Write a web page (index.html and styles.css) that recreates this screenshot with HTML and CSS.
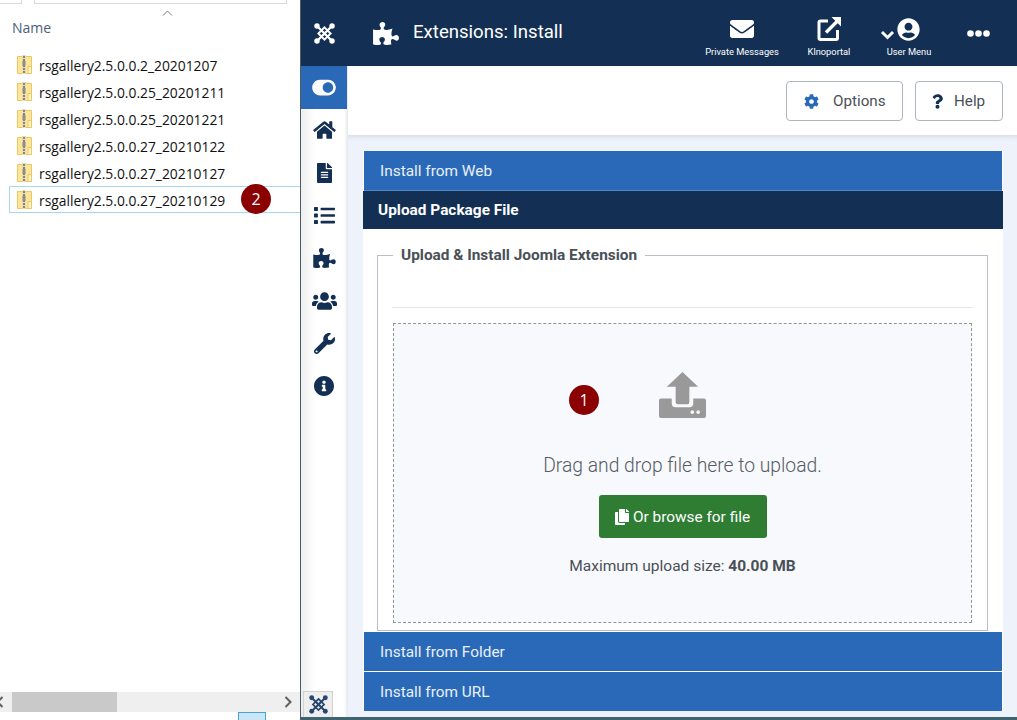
FILE: index.html
```html
<!DOCTYPE html>
<html lang="en">
<head>
  <meta charset="UTF-8">
  <title>Extensions: Install</title>
  <meta name="viewport" content="width=device-width, initial-scale=1.0" />
  <link rel="stylesheet" href="styles.css">
</head>
<body>
  <svg class="defs" width="0" height="0">
    <symbol id="joomla" viewBox="0 0 24 24">
      <g fill="none" stroke="currentColor">
        <path d="M4 4 L20 20 M20 4 L4 20" stroke-width="2.600"/>
        <path d="M12 5 L19 12 L12 19 L5 12 Z" stroke-width="2.200"/>
      </g>
      <g fill="currentColor">
        <circle cx="3.400" cy="3.400" r="3.100"/><circle cx="20.600" cy="3.400" r="3.100"/>
        <circle cx="3.400" cy="20.600" r="3.100"/><circle cx="20.600" cy="20.600" r="3.100"/>
      </g>
    </symbol>
    <symbol id="puzzle" viewBox="0 0 576 512">
      <path d="M519.442 288.651c-41.519 0-59.5 31.593-82.058 31.593C377.409 320.244 432 144 432 144s-196.288 80-196.288-3.297c0-35.827 36.288-46.25 36.288-85.985C272 19.216 243.885 0 210.539 0c-34.654 0-66.366 18.891-66.366 56.346 0 41.364 31.711 59.277 31.711 81.75C175.885 207.719 0 166.758 0 166.758v333.237s178.635 41.047 178.635-28.662c0-22.473-40-40.107-40-81.471 0-37.456 29.25-56.346 63.577-56.346 33.673 0 61.788 19.216 61.788 54.717 0 39.735-36.288 50.158-36.288 85.985 0 60.803 129.675 25.73 181.23 25.73 0 0-34.725-120.101 25.827-120.101 35.962 0 46.423 36.152 86.308 36.152C556.712 416 576 387.99 576 354.443c0-34.199-18.962-65.792-56.558-65.792z" fill="currentColor"/>
    </symbol>
    <symbol id="zip" viewBox="0 0 15 20">
      <path d="M.5 1.500h14v17H.5z" fill="#fde59a" stroke="#ecc865"/>
      <path d="M11 11.500h3.500v7H11z" fill="#fff3c8" stroke="#ecc865"/>
      <path d="M5 0h4v19H5z" fill="#eadcae"/>
      <path d="M7 1v17" stroke="#85857c" stroke-width="2" stroke-dasharray="2 1"/>
      <path d="M5.500 6h3v5h-3z" fill="#8f8f86"/>
    </symbol>
  </svg>

  <div class="screen">
    <div class="explorer">
      <div class="explorer-top">
        <span class="crumb-box"></span>
        <span class="search-box"></span>
      </div>
      <div class="caret"><svg width="11" height="6" viewBox="0 0 11 6"><path d="M1 5.500 L5.500 1 L10 5.500" fill="none" stroke="#7a7a7a"/></svg></div>
      <div class="col-name">Name</div>
      <ul class="files">
        <li class="file"><svg class="zip-icon"><use href="#zip"/></svg>rsgallery2.5.0.0.2_20201207</li>
        <li class="file"><svg class="zip-icon"><use href="#zip"/></svg>rsgallery2.5.0.0.25_20201211</li>
        <li class="file"><svg class="zip-icon"><use href="#zip"/></svg>rsgallery2.5.0.0.25_20201221</li>
        <li class="file"><svg class="zip-icon"><use href="#zip"/></svg>rsgallery2.5.0.0.27_20210122</li>
        <li class="file"><svg class="zip-icon"><use href="#zip"/></svg>rsgallery2.5.0.0.27_20210127</li>
        <li class="file selected"><svg class="zip-icon"><use href="#zip"/></svg>rsgallery2.5.0.0.27_20210129<span class="badge badge-two">2</span></li>
      </ul>
      <div class="hscroll">
        <svg class="arrow" width="8" height="12" viewBox="0 0 8 12"><path d="M6.500 1 L1.500 6 L6.500 11" fill="none" stroke="#606060" stroke-width="2"/></svg>
        <div class="track"><div class="thumb"></div></div>
        <svg class="arrow" width="8" height="12" viewBox="0 0 8 12"><path d="M1.500 1 L6.500 6 L1.500 11" fill="none" stroke="#606060" stroke-width="2"/></svg>
      </div>
      <div class="taskbar"><span class="task-btn"></span></div>
    </div>

    <div class="admin">
      <header class="topbar">
        <div class="brand"><svg class="brand-logo"><use href="#joomla"/></svg></div>
        <svg class="title-icon"><use href="#puzzle"/></svg>
        <h1 class="page-title">Extensions: Install</h1>
        <nav class="top-items">
          <a class="top-item item-msg">
            <svg width="24" height="18" viewBox="0 64 512 384" preserveAspectRatio="none"><path fill="currentColor" d="M502.3 190.8c3.9-3.1 9.7-.2 9.7 4.7V400c0 26.5-21.5 48-48 48H48c-26.5 0-48-21.5-48-48V195.6c0-5 5.7-7.8 9.7-4.7 22.4 17.4 52.1 39.5 154.1 113.6 21.1 15.4 56.7 47.8 92.2 47.6 35.7.3 72-32.8 92.3-47.6 102-74.1 131.6-96.3 154-113.7zM256 320c23.2.4 56.6-29.2 73.4-41.4 132.7-96.3 142.8-104.7 173.4-128.7 5.8-4.5 9.2-11.5 9.2-18.9v-19c0-26.5-21.5-48-48-48H48C21.5 64 0 85.5 0 112v19c0 7.4 3.4 14.3 9.2 18.9 30.6 23.9 40.7 32.4 173.4 128.7 16.8 12.2 50.2 41.8 73.4 41.4z"/></svg>
            <span>Private Messages</span>
          </a>
          <a class="top-item item-link">
            <svg width="24" height="24" viewBox="0 0 24 24"><path d="M11 4H3.500A1.500 1.500 0 0 0 2 5.500V21a1.500 1.500 0 0 0 1.500 1.500H19a1.500 1.500 0 0 0 1.500-1.500V13" fill="none" stroke="currentColor" stroke-width="3"/><path d="M9 15.500 L20 4.500" stroke="currentColor" stroke-width="3.400"/><path d="M14.500 0H24V9.500Z" fill="currentColor"/></svg>
            <span>Klnoportal</span>
          </a>
          <a class="top-item item-user">
            <span class="user-icons">
              <svg width="15" height="10" viewBox="0 0 14 10"><path d="M1.500 2 L7 7.500 L12.500 2" fill="none" stroke="currentColor" stroke-width="3"/></svg>
              <svg width="23" height="23" viewBox="0 0 496 512" class="user-circle"><path fill="currentColor" d="M248 8C111 8 0 119 0 256s111 248 248 248 248-111 248-248S385 8 248 8zm0 96c48.600 0 88 39.400 88 88s-39.400 88-88 88-88-39.400-88-88 39.400-88 88-88zm0 344c-58.700 0-111.300-26.600-146.500-68.200 18.800-35.400 55.600-59.800 98.500-59.800 2.400 0 4.800.4 7.100 1.100 13 4.200 26.600 6.900 40.900 6.900 14.300 0 28-2.700 40.900-6.900 2.300-.7 4.700-1.100 7.100-1.100 42.900 0 79.700 24.400 98.500 59.800C359.300 421.400 306.700 448 248 448z"/></svg>
            </span>
            <span>User Menu</span>
          </a>
          <a class="top-item item-more">
            <svg width="23" height="7" viewBox="0 0 23 7"><circle cx="3.500" cy="3.500" r="3.300" fill="currentColor"/><circle cx="11.500" cy="3.500" r="3.300" fill="currentColor"/><circle cx="19.500" cy="3.500" r="3.300" fill="currentColor"/></svg>
          </a>
        </nav>
      </header>

      <div class="body-row">
        <aside class="sidebar">
          <a class="side-item active"><svg width="24" height="21" viewBox="0 0 576 512"><path fill="currentColor" d="M384 64H192C86 64 0 150 0 256s86 192 192 192h192c106 0 192-86 192-192S490 64 384 64zm0 320c-70.800 0-128-57.300-128-128 0-70.800 57.300-128 128-128 70.800 0 128 57.300 128 128 0 70.800-57.300 128-128 128z"/></svg></a>
          <a class="side-item"><svg width="23" height="20" viewBox="0 0 576 512"><path fill="currentColor" d="M280.370 148.260L96 300.110V464a16 16 0 0 0 16 16l112.060-.29a16 16 0 0 0 15.920-16V368a16 16 0 0 1 16-16h64a16 16 0 0 1 16 16v95.640a16 16 0 0 0 16 16.050L464 480a16 16 0 0 0 16-16V300L295.670 148.260a12.190 12.190 0 0 0-15.300 0zM571.600 251.470L488 182.560V44.050a12 12 0 0 0-12-12h-56a12 12 0 0 0-12 12v72.610L318.470 43a48 48 0 0 0-61 0L4.340 251.470a12 12 0 0 0-1.600 16.900l25.500 31A12 12 0 0 0 45.150 301l235.220-193.740a12.190 12.190 0 0 1 15.300 0L530.900 301a12 12 0 0 0 16.900-1.600l25.500-31a12 12 0 0 0-1.700-16.930z"/></svg></a>
          <a class="side-item"><svg width="15" height="20" viewBox="0 0 384 512"><path fill="currentColor" d="M224 136V0H24C10.700 0 0 10.700 0 24v464c0 13.300 10.700 24 24 24h336c13.300 0 24-10.700 24-24V160H248c-13.200 0-24-10.800-24-24zm64 236c0 6.600-5.400 12-12 12H108c-6.600 0-12-5.400-12-12v-8c0-6.600 5.400-12 12-12h168c6.600 0 12 5.400 12 12v8zm0-64c0 6.600-5.400 12-12 12H108c-6.600 0-12-5.400-12-12v-8c0-6.600 5.400-12 12-12h168c6.600 0 12 5.400 12 12v8zm0-72v8c0 6.600-5.400 12-12 12H108c-6.600 0-12-5.400-12-12v-8c0-6.600 5.400-12 12-12h168c6.600 0 12 5.400 12 12zm96-114.100v6.100H256V0h6.100c6.400 0 12.500 2.500 17 7l97.900 98c4.500 4.500 7 10.600 7 16.900z"/></svg></a>
          <a class="side-item"><svg width="21" height="21" viewBox="0 0 512 512"><path fill="currentColor" d="M80 368H16a16 16 0 0 0-16 16v64a16 16 0 0 0 16 16h64a16 16 0 0 0 16-16v-64a16 16 0 0 0-16-16zm0-320H16A16 16 0 0 0 0 64v64a16 16 0 0 0 16 16h64a16 16 0 0 0 16-16V64a16 16 0 0 0-16-16zm0 160H16a16 16 0 0 0-16 16v64a16 16 0 0 0 16 16h64a16 16 0 0 0 16-16v-64a16 16 0 0 0-16-16zm416 176H176a16 16 0 0 0-16 16v32a16 16 0 0 0 16 16h320a16 16 0 0 0 16-16v-32a16 16 0 0 0-16-16zm0-320H176a16 16 0 0 0-16 16v32a16 16 0 0 0 16 16h320a16 16 0 0 0 16-16V80a16 16 0 0 0-16-16zm0 160H176a16 16 0 0 0-16 16v32a16 16 0 0 0 16 16h320a16 16 0 0 0 16-16v-32a16 16 0 0 0-16-16z"/></svg></a>
          <a class="side-item"><svg class="side-puzzle"><use href="#puzzle"/></svg></a>
          <a class="side-item"><svg width="25" height="20" viewBox="0 0 640 512"><path fill="currentColor" d="M96 224c35.300 0 64-28.700 64-64s-28.700-64-64-64-64 28.700-64 64 28.700 64 64 64zm448 0c35.300 0 64-28.700 64-64s-28.700-64-64-64-64 28.700-64 64 28.700 64 64 64zm32 32h-64c-17.600 0-33.500 7.100-45.100 18.600 40.300 22.100 68.900 62 75.100 109.400h66c17.700 0 32-14.300 32-32v-32c0-35.300-28.700-64-64-64zm-256 0c61.900 0 112-50.100 112-112S381.900 32 320 32 208 82.100 208 144s50.100 112 112 112zm76.800 32h-8.300c-20.800 10-43.900 16-68.500 16s-47.600-6-68.500-16h-8.300C179.600 288 128 339.600 128 403.200V432c0 26.500 21.500 48 48 48h288c26.500 0 48-21.500 48-48v-28.800c0-63.600-51.600-115.200-115.200-115.200zm-223.700-13.400C161.500 263.100 145.600 256 128 256H64c-35.300 0-64 28.700-64 64v32c0 17.700 14.300 32 32 32h65.900c6.300-47.400 34.900-87.300 75.200-109.400z"/></svg></a>
          <a class="side-item"><svg width="21" height="21" viewBox="0 0 512 512"><path fill="currentColor" d="M507.730 109.100c-2.240-9.030-13.540-12.090-20.120-5.510l-74.360 74.360-67.880-11.310-11.310-67.880 74.360-74.360c6.620-6.620 3.430-17.900-5.660-20.160-47.380-11.740-99.550.91-136.580 37.930-39.640 39.640-50.550 97.100-34.050 147.200L18.740 402.760c-24.990 24.990-24.990 65.510 0 90.500 24.990 24.990 65.510 24.990 90.500 0l213.210-213.210c50.120 16.710 107.470 5.680 147.370-34.220 37.070-37.070 49.700-89.320 37.910-136.730zM64 472c-13.250 0-24-10.750-24-24 0-13.260 10.750-24 24-24s24 10.740 24 24c0 13.250-10.750 24-24 24z"/></svg></a>
          <a class="side-item"><svg width="20" height="20" viewBox="8 8 496 496"><path fill="currentColor" d="M256 8C119.043 8 8 119.083 8 256c0 136.997 111.043 248 248 248s248-111.003 248-248C504 119.083 392.957 8 256 8zm0 110c23.196 0 42 18.804 42 42s-18.804 42-42 42-42-18.804-42-42 18.804-42 42-42zm56 254c0 6.627-5.373 12-12 12h-88c-6.627 0-12-5.373-12-12v-24c0-6.627 5.373-12 12-12h12v-64h-12c-6.627 0-12-5.373-12-12v-24c0-6.627 5.373-12 12-12h64c6.627 0 12 5.373 12 12v100h12c6.627 0 12 5.373 12 12v24z"/></svg></a>
          <div class="side-foot"><svg class="foot-logo"><use href="#joomla"/></svg></div>
        </aside>

        <main class="main">
          <div class="toolbar">
            <button class="tool-btn btn-options" type="button">
              <svg width="15" height="15" viewBox="0 0 512 512"><path fill="#2a69b8" d="M487.400 315.700l-42.600-24.600c4.300-23.200 4.300-47 0-70.200l42.600-24.600c4.900-2.800 7.100-8.600 5.500-14-11.100-35.600-30-67.800-54.700-94.600-3.800-4.100-10-5.100-14.800-2.300L380.800 110c-17.900-15.400-38.500-27.300-60.800-35.100V25.800c0-5.600-3.900-10.500-9.400-11.700-36.700-8.200-74.300-7.800-109.200 0-5.500 1.200-9.400 6.100-9.400 11.700V75c-22.200 7.900-42.800 19.800-60.800 35.100L88.700 85.500c-4.900-2.800-11-1.900-14.800 2.300-24.700 26.700-43.600 58.900-54.700 94.600-1.700 5.400.6 11.200 5.500 14L67.300 221c-4.300 23.200-4.300 47 0 70.200l-42.600 24.600c-4.900 2.800-7.100 8.600-5.500 14 11.100 35.600 30 67.800 54.700 94.600 3.800 4.100 10 5.100 14.800 2.300l42.600-24.600c17.900 15.400 38.500 27.300 60.800 35.100v49.200c0 5.600 3.900 10.500 9.400 11.700 36.700 8.200 74.300 7.800 109.200 0 5.500-1.200 9.400-6.100 9.400-11.700v-49.200c22.200-7.900 42.800-19.800 60.800-35.100l42.600 24.600c4.900 2.800 11 1.900 14.800-2.300 24.700-26.700 43.600-58.900 54.700-94.600 1.500-5.500-.7-11.300-5.600-14.100zM256 336c-44.100 0-80-35.900-80-80s35.900-80 80-80 80 35.900 80 80-35.900 80-80 80z"/></svg>
              Options
            </button>
            <button class="tool-btn btn-help" type="button">
              <svg width="11" height="15" viewBox="0 0 384 512"><path fill="#132f53" d="M202.021 0C122.202 0 70.503 32.703 29.914 91.026c-7.363 10.580-5.093 25.086 5.178 32.874l43.138 32.709c10.373 7.865 25.132 6.026 33.253-4.148 25.049-31.381 43.630-49.449 82.757-49.449 30.764 0 68.816 19.799 68.816 49.631 0 22.552-18.617 34.134-48.993 51.164-35.423 19.860-82.299 44.576-82.299 106.405V320c0 13.255 10.745 24 24 24h72.471c13.255 0 24-10.745 24-24v-5.773c0-42.860 125.268-44.645 125.268-160.627C377.504 66.256 286.902 0 202.021 0zM192 373.459c-38.196 0-69.271 31.075-69.271 69.271 0 38.195 31.075 69.270 69.271 69.270s69.271-31.075 69.271-69.271-31.075-69.270-69.271-69.270z"/></svg>
              Help
            </button>
          </div>

          <div class="content">
            <div class="accordion">
              <div class="acc-head">Install from Web</div>
              <div class="acc-head current">Upload Package File</div>
              <div class="acc-body">
                <fieldset class="upload-set">
                  <legend>Upload &amp; Install Joomla Extension</legend>
                  <hr class="rule">
                  <div class="dropzone">
                    <span class="badge badge-one">1</span>
                    <svg class="upload-icon" width="47" height="46" viewBox="0 0 48 47">
                      <path d="M24 0 L40 15 H31 V31 A2 2 0 0 1 29 33 H19 A2 2 0 0 1 17 31 V15 H8 Z" fill="#999"/>
                      <path d="M2 27 H13 V32 A4 4 0 0 0 17 36 H31 A4 4 0 0 0 35 32 V27 H46 A2 2 0 0 1 48 29 V45 A2 2 0 0 1 46 47 H2 A2 2 0 0 1 0 45 V29 A2 2 0 0 1 2 27 Z" fill="#999"/>
                      <circle cx="34" cy="41" r="1.800" fill="#f8f9fc"/><circle cx="40" cy="41" r="1.800" fill="#f8f9fc"/>
                    </svg>
                    <p class="drop-text">Drag and drop file here to upload.</p>
                    <button class="browse-btn" type="button">
                      <svg width="14" height="16" viewBox="0 0 448 512"><path fill="currentColor" d="M320 448v40c0 13.255-10.745 24-24 24H24c-13.255 0-24-10.745-24-24V120c0-13.255 10.745-24 24-24h72v296c0 30.879 25.121 56 56 56h168zm0-344V0H152c-13.255 0-24 10.745-24 24v368c0 13.255 10.745 24 24 24h272c13.255 0 24-10.745 24-24V128H344c-13.200 0-24-10.800-24-24zm120.971-31.029L375.029 7.029A24 24 0 0 0 358.059 0H352v96h96v-6.059a24 24 0 0 0-7.029-16.970z"/></svg>
                      Or browse for file
                    </button>
                    <p class="max-size">Maximum upload size: <strong>40.00 MB</strong></p>
                  </div>
                </fieldset>
              </div>
              <div class="acc-head">Install from Folder</div>
              <div class="acc-head">Install from URL</div>
            </div>
          </div>
        </main>
      </div>
      <div class="desktop-strip"></div>
    </div>
  </div>
</body>
</html>
```

FILE: styles.css
```css
* {
    box-sizing: border-box;
}

html, body {
    margin: 0;
    padding: 0;
}

body {
    font-family: Roboto, "Liberation Sans", sans-serif;
    background: #fff;
    overflow: hidden;
}

.defs {
    position: absolute;
}

.screen {
    display: flex;
    width: 1017px;
    height: 720px;
    overflow: hidden;
}

/* file explorer window */
.explorer {
    width: 300px;
    flex: none;
    display: flex;
    flex-direction: column;
    background: #fff;
    font-family: "Open Sans", "Noto Sans", sans-serif;
}

.explorer-top {
    display: flex;
    height: 4px;
}

.crumb-box {
    width: 22px;
    border: 1px solid #d9d9d9;
    border-top: 0;
    border-left: 0;
}

.search-box {
    width: 253px;
    margin-left: 12px;
    border: 1px solid #d9d9d9;
    border-top: 0;
}

.caret {
    height: 16px;
    padding: 6px 0 0 162px;
    line-height: 0;
}

.col-name {
    height: 31px;
    padding: 0 0 0 12px;
    font-size: 14px;
    line-height: 16px;
    color: #4c607a;
}

.files {
    list-style: none;
    margin: 0;
    padding: 0 0 0 9px;
    height: 640px;
    flex: 1;
}

.file {
    position: relative;
    display: flex;
    align-items: center;
    height: 27px;
    padding: 2px 0 0 7px;
    font-size: 13.850px;
    color: #111;
    border: 1px solid transparent;
    white-space: nowrap;
}

.file.selected {
    border-color: #a8d4f5;
    border-right: 0;
}

.zip-icon {
    width: 15px;
    height: 20px;
    margin: 0 7px 2px 0;
    flex: none;
}

.hscroll {
    display: flex;
    align-items: center;
    height: 20px;
    background: #efefef;
}

.hscroll .arrow:first-child {
    margin-left: -4px;
}

.track {
    flex: 1;
    height: 100%;
    padding-left: 8px;
}

.thumb {
    width: 105px;
    height: 100%;
    background: #c9c9c9;
}

.hscroll .arrow:last-child {
    margin-right: 8px;
}

.taskbar {
    height: 8px;
    padding-left: 238px;
}

.task-btn {
    display: block;
    width: 28px;
    height: 8px;
    background: #c9e6f6;
    border: 1px solid #4aa3d8;
    border-bottom: 0;
}

.badge {
    position: absolute;
    display: flex;
    align-items: center;
    justify-content: center;
    width: 30px;
    height: 30px;
    border-radius: 50%;
    background: #8b0000;
    color: #fff;
    font-family: "Open Sans", sans-serif;
    font-size: 16px;
}

.badge-two {
    left: 231px;
    top: -3px;
}

.badge-one {
    left: 175px;
    top: 61px;
}

/* joomla admin */
.admin {
    flex: 1;
    display: flex;
    flex-direction: column;
    min-width: 0;
    border-left: 1px solid #4b5c66;
}

.topbar {
    display: flex;
    align-items: center;
    height: 66px;
    flex: none;
    background: #132f53;
    color: #fff;
}

.brand {
    width: 47px;
    display: flex;
    justify-content: center;
}

.brand-logo {
    width: 21px;
    height: 21px;
    color: #fff;
}

.title-icon {
    width: 26px;
    height: 23px;
    margin-left: 25px;
    color: #fff;
}

.page-title {
    margin: 0 0 3px 14px;
    font-size: 18.600px;
    font-weight: 400;
}

.top-items {
    display: flex;
    margin-left: auto;
    height: 100%;
}

.top-item {
    display: flex;
    flex-direction: column;
    align-items: center;
    justify-content: flex-end;
    height: 57px;
    color: #fff;
    font-size: 9.300px;
    white-space: nowrap;
}

.item-msg {
    width: 94px;
    gap: 8px;
}

.item-link {
    width: 80px;
    gap: 5px;
}

.item-user {
    width: 60px;
    margin-left: 10px;
    gap: 5px;
}

.item-more {
    width: 78px;
    height: 100%;
    justify-content: center;
}

.user-icons {
    display: flex;
    align-items: flex-end;
    gap: 2px;
    height: 24px;
    margin-right: 18px;
}

.user-icons svg:first-child {
    margin-bottom: 1px;
}

.body-row {
    flex: 1;
    display: flex;
    min-height: 0;
}

.sidebar {
    position: relative;
    width: 47px;
    flex: none;
    padding-right: 1px;
    background: linear-gradient(to right, #eee 0, #fff 30%, #fff 92%, #e4e6ea 100%);
    color: #132f53;
}

.side-item {
    display: flex;
    align-items: center;
    justify-content: center;
    height: 42.700px;
}

.side-item.active {
    background: #2a69b8;
    color: #fff;
}

.side-puzzle {
    width: 23px;
    height: 20px;
    color: #132f53;
}

.side-foot {
    position: absolute;
    left: 2px;
    bottom: 0;
    width: 30px;
    height: 26px;
    display: flex;
    align-items: center;
    justify-content: center;
    background: #eee;
    border: 1px solid #d2d2d2;
    border-bottom: 0;
}

.foot-logo {
    width: 19px;
    height: 19px;
    color: #27476f;
}

.main {
    flex: 1;
    display: flex;
    flex-direction: column;
    min-width: 0;
}

.toolbar {
    display: flex;
    justify-content: flex-end;
    align-items: flex-start;
    gap: 12px;
    height: 69px;
    flex: none;
    padding: 15px 14px 0 0;
    background: #fff;
}

.tool-btn {
    display: flex;
    align-items: center;
    height: 40px;
    background: #fff;
    border: 1px solid #adb5bd;
    border-radius: 4px;
    font-family: Roboto, sans-serif;
    font-size: 15.200px;
    color: #495057;
}

.btn-options {
    width: 117px;
    padding-left: 17px;
    gap: 14px;
}

.btn-help {
    width: 88px;
    padding-left: 16px;
    gap: 11px;
}

.content {
    flex: 1;
    min-height: 0;
    padding: 16px 14px 0 15px;
    background: #eef2fb;
    box-shadow: inset 0 6px 6px -6px #c9ced6;
}

.accordion {
    background: #fff;
}

.acc-head {
    display: flex;
    align-items: center;
    height: 39px;
    margin: 0 1px 1px 1px;
    padding: 1px 0 0 16px;
    background: #2a69b8;
    color: #e9f0fa;
    font-size: 15.400px;
}

.acc-head:nth-child(1) {
    height: 41px;
    margin-bottom: 0;
    padding-top: 0;
    border-bottom: 2px solid #5585c5;
}

.acc-head.current {
    height: 38px;
    margin: -1px 0 0;
    padding: 0 0 0 15px;
    background: #132f53;
    color: #fff;
    font-weight: 700;
}

.acc-body {
    padding: 17px 15px 1px 14px;
}

.upload-set {
    margin: 0;
    padding: 0 15px 7px 15px;
    height: 385px;
    border: 1px solid #b8bfc8;
    min-width: 0;
}

.upload-set legend {
    margin-left: 0;
    padding: 0 8px;
    font-size: 15.400px;
    font-weight: 700;
    color: #495057;
}

.rule {
    height: 1px;
    margin: 43px -1px 15px;
    border: 0;
    background: #e3e5e8;
}

.dropzone {
    position: relative;
    display: flex;
    flex-direction: column;
    align-items: center;
    height: 300px;
    padding-top: 48px;
    background: #f8f9fc;
    border: 1px dashed #959595;
}

.drop-text {
    margin: 36px 0 0;
    font-size: 19.300px;
    font-weight: 300;
    color: #555c66;
}

.browse-btn {
    display: flex;
    align-items: center;
    justify-content: center;
    gap: 4px;
    width: 168px;
    height: 43px;
    margin-top: 18px;
    background: #2e7d32;
    border: 0;
    border-radius: 3px;
    color: #fff;
    font-family: Roboto, sans-serif;
    font-size: 15.400px;
}

.max-size {
    margin: 19px 0 0;
    font-size: 15.500px;
    color: #495057;
}

.desktop-strip {
    height: 3px;
    flex: none;
    background: #3f6470;
}
```
